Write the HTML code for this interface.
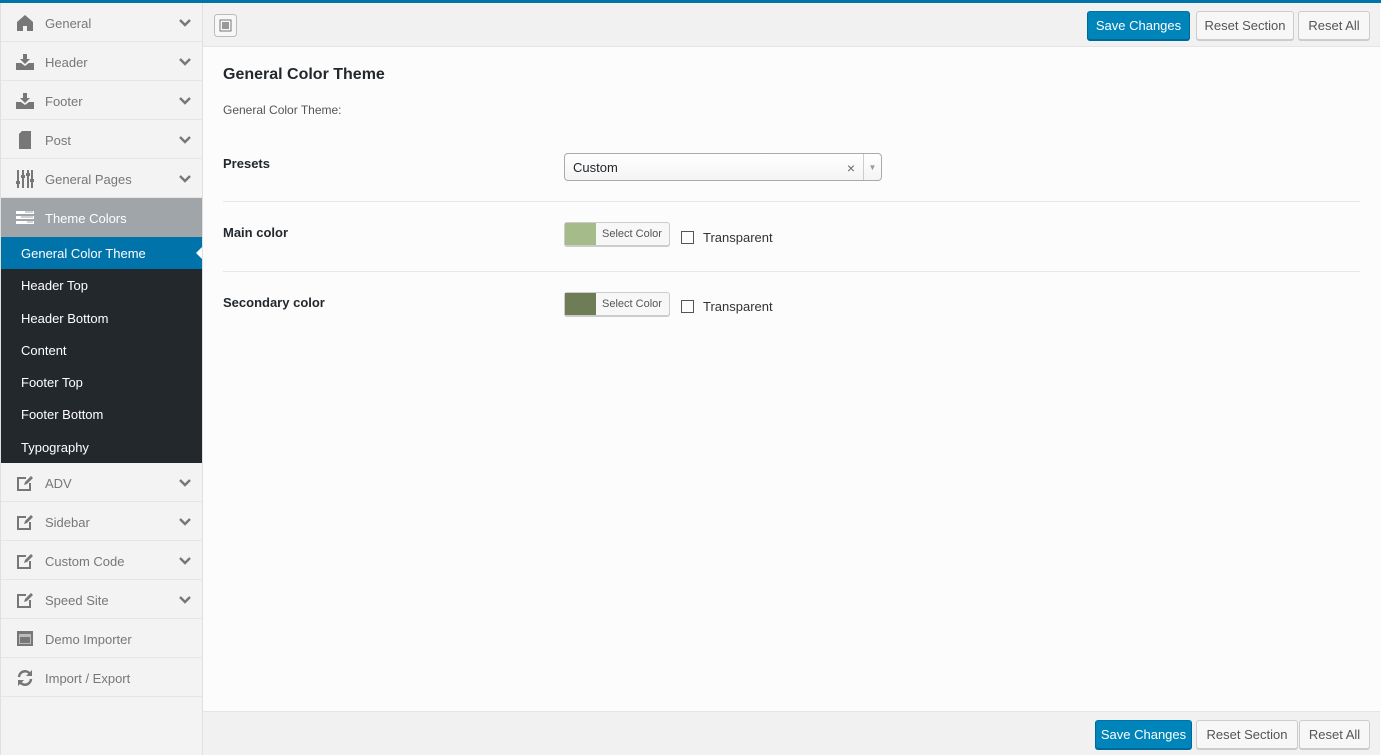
<!DOCTYPE html>
<html><head><meta charset="utf-8"><style>
*{box-sizing:border-box;margin:0;padding:0}
body{width:1381px;height:755px;overflow:hidden;background:#fcfcfc;font-family:"Liberation Sans",sans-serif;font-size:13px;color:#23282d;position:relative}
.top{position:absolute;left:0;top:0;width:1381px;height:3px;background:#0073aa}
.side{position:absolute;left:0;top:3px;width:203px;height:752px;background:#f3f3f3;border-right:1px solid #e0e0e0;border-left:1px solid #e0e0e0}
.it{height:39px;border-bottom:1px solid #e6e6e6;position:relative;color:#777;font-size:13px;line-height:41px;padding-left:44px}
.it svg.ic{position:absolute;left:15px;top:11px}
.it .ch{position:absolute;right:11px;top:16px}
.tc{background:#a0a5aa;color:#fff;border-bottom:none}
.sub{background:#23282d}
.sub div{height:32.3px;line-height:34px;padding-left:20px;color:#fff;font-size:13px}
.sub .act{background:#0073aa;position:relative}
.sub .act:after{content:"";position:absolute;right:0;top:10px;border:6px solid transparent;border-right-color:#fcfcfc}
.hb{position:absolute;left:203px;top:3px;right:1px;height:44px;background:#f1f1f1;border-bottom:1px solid #e5e5e5}
.fb{position:absolute;left:203px;top:711px;right:1px;height:44px;background:#f1f1f1;border-top:1px solid #e5e5e5}
.btn{position:absolute;height:29px;line-height:27px;text-align:center;border:1px solid #ccc;background:#f7f7f7;color:#555;border-radius:3px;font-size:13px;box-shadow:0 1px 0 #ccc}
.btn.p{background:#0085ba;border-color:#0073aa #006799 #006799;color:#fff;box-shadow:0 1px 0 #006799}
.ttl{position:absolute;left:223px;top:66px;font-size:16px;font-weight:bold}
.desc{position:absolute;left:223px;top:103px;font-size:12px;color:#555}
.lab{position:absolute;left:223px;font-weight:bold;font-size:13px}
.hr{position:absolute;left:223px;width:1137px;height:1px;background:#e8e8e8}
.sel{position:absolute;left:564px;top:153px;width:318px;height:28px;border:1px solid #aaa;border-radius:4px;background:linear-gradient(#fff,#f4f4f4);font-size:13px;line-height:28px;padding-left:8px}
.cp{position:absolute;left:564px;width:106px;height:24px;border:1px solid #ccc;border-radius:3px;background:#f7f7f7;font-size:11px;color:#555;line-height:22px;box-shadow:0 1px 0 #ccc}
.cp span{display:inline-block;width:31px;height:22px;vertical-align:top;margin-right:6px}
.cb{position:absolute;left:681px;width:13px;height:13px;border:1px solid #555}
.tr{position:absolute;left:703px;font-size:13px;color:#333}
</style></head><body>
<div class="top"></div>
<div class="side">
 <div class="it"><svg class="ic" width="18" height="18" viewBox="0 0 18 18"><path d="M1 8L9 1l8 7v9h-6v-5H7v5H1z" fill="#777"/></svg>General<svg class="ch" width="12" height="8" viewBox="0 0 12 8"><path d="M1 1l5 5 5-5" stroke="#777" stroke-width="2.4" fill="none"/></svg></div>
 <div class="it"><svg class="ic" width="18" height="18" viewBox="0 0 18 18"><path d="M7 1h4v5h3l-5 5-5-5h3z M0 10h5l4 3 4-3h5v7H0z" fill="#777"/></svg>Header<svg class="ch" width="12" height="8" viewBox="0 0 12 8"><path d="M1 1l5 5 5-5" stroke="#777" stroke-width="2.4" fill="none"/></svg></div>
 <div class="it"><svg class="ic" width="18" height="18" viewBox="0 0 18 18"><path d="M7 1h4v5h3l-5 5-5-5h3z M0 10h5l4 3 4-3h5v7H0z" fill="#777"/></svg>Footer<svg class="ch" width="12" height="8" viewBox="0 0 12 8"><path d="M1 1l5 5 5-5" stroke="#777" stroke-width="2.4" fill="none"/></svg></div>
 <div class="it"><svg class="ic" width="18" height="18" viewBox="0 0 18 18"><path d="M6 0h9v18H3V3z" fill="#777"/></svg>Post<svg class="ch" width="12" height="8" viewBox="0 0 12 8"><path d="M1 1l5 5 5-5" stroke="#777" stroke-width="2.4" fill="none"/></svg></div>
 <div class="it"><svg class="ic" width="18" height="18" viewBox="0 0 18 18"><path d="M2 0v18M7 0v18M12 0v18M16 0v18" stroke="#777" stroke-width="2"/><path d="M0 11h4v3H0zM5 5h4v3H5zM10 3h4v3h-4zM14 9h4v3h-4z" fill="#777"/></svg>General Pages<svg class="ch" width="12" height="8" viewBox="0 0 12 8"><path d="M1 1l5 5 5-5" stroke="#777" stroke-width="2.4" fill="none"/></svg></div>
 <div class="it tc"><svg class="ic" width="18" height="18" viewBox="0 0 18 18"><path d="M0 2h18v3H0zM0 7h18v3H0zM0 12h18v3H0z" fill="#fff"/><path d="M9 3h8M5 8h12M11 13h6" stroke="#a0a5aa"/></svg>Theme Colors</div>
 <div class="sub">
  <div class="act">General Color Theme</div>
  <div>Header Top</div><div>Header Bottom</div><div>Content</div><div>Footer Top</div><div>Footer Bottom</div><div>Typography</div>
 </div>
 <div class="it"><svg class="ic" width="18" height="18" viewBox="0 0 18 18"><path d="M1 3h9v2H3v10h10V9h2v8H1z" fill="#777"/><path d="M8 11l1-3 6-6 2 2-6 6z" fill="#777"/></svg>ADV<svg class="ch" width="12" height="8" viewBox="0 0 12 8"><path d="M1 1l5 5 5-5" stroke="#777" stroke-width="2.4" fill="none"/></svg></div>
 <div class="it"><svg class="ic" width="18" height="18" viewBox="0 0 18 18"><path d="M1 3h9v2H3v10h10V9h2v8H1z" fill="#777"/><path d="M8 11l1-3 6-6 2 2-6 6z" fill="#777"/></svg>Sidebar<svg class="ch" width="12" height="8" viewBox="0 0 12 8"><path d="M1 1l5 5 5-5" stroke="#777" stroke-width="2.4" fill="none"/></svg></div>
 <div class="it"><svg class="ic" width="18" height="18" viewBox="0 0 18 18"><path d="M1 3h9v2H3v10h10V9h2v8H1z" fill="#777"/><path d="M8 11l1-3 6-6 2 2-6 6z" fill="#777"/></svg>Custom Code<svg class="ch" width="12" height="8" viewBox="0 0 12 8"><path d="M1 1l5 5 5-5" stroke="#777" stroke-width="2.4" fill="none"/></svg></div>
 <div class="it"><svg class="ic" width="18" height="18" viewBox="0 0 18 18"><path d="M1 3h9v2H3v10h10V9h2v8H1z" fill="#777"/><path d="M8 11l1-3 6-6 2 2-6 6z" fill="#777"/></svg>Speed Site<svg class="ch" width="12" height="8" viewBox="0 0 12 8"><path d="M1 1l5 5 5-5" stroke="#777" stroke-width="2.4" fill="none"/></svg></div>
 <div class="it"><svg class="ic" width="18" height="18" viewBox="0 0 18 18"><path d="M1 1h16v15H1z" fill="#777"/><path d="M3 4h12v10H3z" fill="#bbb"/><path d="M4 7h10v6H4z" fill="#777"/></svg>Demo Importer</div>
 <div class="it"><svg class="ic" width="18" height="18" viewBox="0 0 18 18"><path d="M3 8a6 6 0 0 1 11-3M15 10a6 6 0 0 1-11 3" stroke="#777" stroke-width="2.5" fill="none"/><path d="M16 1v6h-6zM2 17v-6h6z" fill="#777"/></svg>Import / Export</div>
</div>
<div class="hb">
 <svg style="position:absolute;left:11px;top:11px" width="23" height="23" viewBox="0 0 23 23"><rect x="0.5" y="0.5" width="22" height="22" rx="3" fill="#f7f7f7" stroke="#bbb"/><rect x="6" y="6" width="11" height="11" fill="none" stroke="#777"/><rect x="8" y="8" width="7" height="7" fill="#999"/></svg>
 <div class="btn p" style="left:884px;top:8px;width:103px">Save Changes</div>
 <div class="btn" style="left:993px;top:8px;width:98px">Reset Section</div>
 <div class="btn" style="left:1095px;top:8px;width:72px">Reset All</div>
</div>
<div class="ttl">General Color Theme</div>
<div class="desc">General Color Theme:</div>
<div class="lab" style="top:156px">Presets</div>
<div class="sel">Custom<span style="position:absolute;right:26px;top:0;color:#666;font-size:14px">×</span><span style="position:absolute;right:0;top:0;width:18px;height:26px;border-left:1px solid #ccc;color:#999;font-size:8px;text-align:center">▼</span></div>
<div class="hr" style="top:201px"></div>
<div class="lab" style="top:225px">Main color</div>
<div class="cp" style="top:222px"><span style="background:#a5bb8a"></span>Select Color</div>
<div class="cb" style="top:231px"></div><div class="tr" style="top:230px">Transparent</div>
<div class="hr" style="top:271px"></div>
<div class="lab" style="top:295px">Secondary color</div>
<div class="cp" style="top:292px"><span style="background:#6f7c58"></span>Select Color</div>
<div class="cb" style="top:300px"></div><div class="tr" style="top:299px">Transparent</div>
<div class="fb">
 <div class="btn p" style="left:892px;top:8px;width:97px">Save Changes</div>
 <div class="btn" style="left:993px;top:8px;width:102px">Reset Section</div>
 <div class="btn" style="left:1096px;top:8px;width:71px">Reset All</div>
</div>
</body></html>
